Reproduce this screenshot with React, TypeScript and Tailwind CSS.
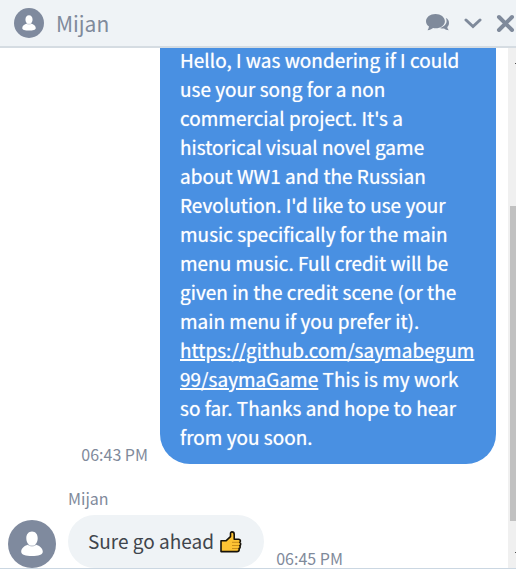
import React from "react";

function Avatar({ className }: { className: string }) {
  return (
    <svg viewBox="0 0 48 48" className={className} aria-hidden="true">
      <circle cx="24" cy="24" r="24" fill="#7f8a9e" />
      <path
        d="M24 11.500c-3.500 0-5.700 2.800-5.700 6.700 0 2.600 1 5 2.700 6.400-4.600.9-7.800 3.900-7.800 7.200 0 2.900 4.500 4.300 10.800 4.300s10.800-1.400 10.800-4.300c0-3.300-3.200-6.300-7.800-7.200 1.700-1.400 2.700-3.800 2.700-6.400 0-3.900-2.200-6.700-5.700-6.700z"
        fill="#fff"
      />
      <path d="M19.500 24.200c2.500 2.400 6.500 2.400 9 0" fill="none" stroke="#a4adbb" strokeWidth="0.8" />
    </svg>
  );
}

function ChatsIcon() {
  return (
    <svg viewBox="0 0 24 18" className="h-[18px] w-6" aria-hidden="true" fill="#7f8a9b">
      <path d="M9.500 0C4.200 0 0 3.200 0 7.200c0 2.200 1.100 4 3 5.300-.2 1.500-.7 2.700-1.500 3.700 2.200-.1 4.100-.9 5.600-2.100.8.100 1.600.2 2.400.2 5.200 0 9.400-3.100 9.400-7.100S14.700 0 9.500 0z" />
      <path d="M19.800 4.100c2.200.9 3.200 2.700 3.200 4.900 0 1.700-.6 3.100-1.700 4.100.1 1.300.7 2.300 1.500 3.200-1.900-.1-3.500-.8-4.700-1.800-1.400.2-2.900 0-4.100-.5 4-1.100 6.600-3.700 6.600-6.900 0-1.100-.3-2.100-.8-3z" />
    </svg>
  );
}

function ThumbsUp() {
  return (
    <svg viewBox="0 0 22 22" className="mx-0.5 inline-block h-[22px] w-[22px] align-[-4px]" role="img" aria-label="thumbs up">
      <path
        d="M1 9.700h5.200l4.300-4.100V2.500C10.500 1.400 11.200.9 12 .9c1.300 0 2.200 1 2.200 2.500v4.800h4.300c1.300 0 1.900.8 1.900 1.700 0 .6-.2 1-.6 1.400.6.400.9.900.9 1.600 0 .8-.4 1.400-1 1.700.3.300.5.800.5 1.300 0 .8-.5 1.400-1.200 1.600.1.300.2.600.2.900 0 1.200-.9 2.200-2.300 2.200H1z"
        fill="#fdc334"
        stroke="#17130b"
        strokeWidth="1.600"
        strokeLinejoin="round"
      />
      <path d="M12 11.300h7M12 14.500h7M12 17.500h6" fill="none" stroke="#c98e1c" strokeWidth="1" />
    </svg>
  );
}

export default function App() {
  return (
    <div className="flex h-screen flex-col bg-white pb-0.5 font-['Noto_Sans_CJK_SC',sans-serif] text-[#7f8a9b]">
      <header className="flex h-12 shrink-0 items-center border-b-2 border-[#d5dce2] bg-[#eff3f6] pl-3.5">
        <Avatar className="size-[30px]" />
        <h1 className="ml-3 flex-1 text-[21px] leading-8">Mijan</h1>
        <button type="button" aria-label="Conversations" className="mr-3.5">
          <ChatsIcon />
        </button>
        <button type="button" aria-label="Minimize" className="mr-3.5">
          <svg viewBox="0 0 18 12" className="h-3 w-[18px]" aria-hidden="true">
            <path d="M2 3l7 6.500 7-6.500" fill="none" stroke="#7f8a9b" strokeWidth="3" strokeLinecap="round" />
          </svg>
        </button>
        <button type="button" aria-label="Close">
          <svg viewBox="0 0 20 18" className="h-[18px] w-5" aria-hidden="true">
            <path d="M3 3l13 13M16 3l-13 13" stroke="#7f8a9b" strokeWidth="4" strokeLinecap="round" />
          </svg>
        </button>
      </header>
      <div className="flex min-h-0 flex-1 border-b border-[#cbd7e2]">
        <main className="flex min-w-0 flex-1 flex-col justify-end overflow-hidden pl-2">
          <div className="flex items-end justify-end pr-3">
            <time className="mr-3 text-base leading-5">06:43 PM</time>
            <div className="w-[336px] rounded-b-[30px] bg-[#4990e2] px-5 pt-[11px] pb-[13px] text-[19px] leading-[29px] text-white [text-shadow:0_0_1px_rgba(255,255,255,0.7)]">
              Hello, I was wondering if I could use your song for a non commercial project. It's a historical visual novel game about WW1 and the Russian Revolution. I'd like to use your music specifically for the main menu music. Full credit will be given in the credit scene (or the main menu if you prefer it).
              <br />
              <a href="https://github.com/saymabegum99/saymaGame" className="break-all underline decoration-2">
                https://github.com/saymabegum99/saymaGame
              </a>{" "}
              This is my work so far. Thanks and hope to hear from you soon.
            </div>
          </div>
          <p className="mt-[22px] ml-[60px] text-base leading-[25px]">Mijan</p>
          <div className="mt-1 flex items-end">
            <Avatar className="mr-3 size-12" />
            <div className="rounded-[27px] bg-[#eff3f6] px-5 pt-[11px] pb-[13px] text-[19px] leading-[29px] text-[#3f454c]">
              Sure go ahead <ThumbsUp />
            </div>
            <time className="ml-3 text-base leading-5">06:45 PM</time>
          </div>
        </main>
        <div className="flex w-2 shrink-0 flex-col items-end justify-between bg-[#f0f0f0] py-[15px]" aria-hidden="true">
          <div className="h-px w-px bg-[#505050]" />
          <div className="mt-[111px] h-[315px] w-1.5 bg-[#c1c1c1]" />
          <div className="h-px w-px bg-[#505050]" />
        </div>
      </div>
    </div>
  );
}
